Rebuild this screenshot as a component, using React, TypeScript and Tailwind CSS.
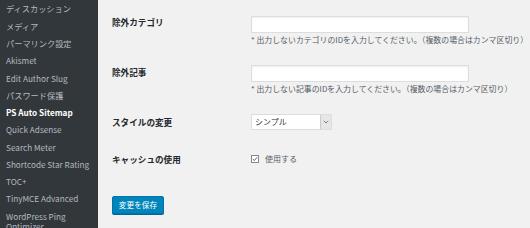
const FONT = '"Noto Sans CJK JP", "Noto Sans", sans-serif'

const MENU = [
  'ディスカッション',
  'メディア',
  'パーマリンク設定',
  'Akismet',
  'Edit Author Slug',
  'パスワード保護',
  'PS Auto Sitemap',
  'Quick Adsense',
  'Search Meter',
  'Shortcode Star Rating',
  'TOC+',
  'TinyMCE Advanced',
  'WordPress Ping Optimizer',
]

function Sidebar() {
  return (
    <aside className="w-[98px] shrink-0 overflow-hidden bg-[#32373c]">
      <ul>
        {MENU.map((item) => {
          const active = item === 'PS Auto Sitemap'
          return (
            <li
              key={item}
              className={
                active
                  ? 'py-[3.4px] pl-[6px] pr-[4px] text-[8.2px] leading-[10.5px] font-bold text-white'
                  : 'py-[3.4px] pl-[6px] pr-[4px] text-[8.2px] leading-[10.5px] text-[#b4b9be]'
              }
            >
              {item === 'WordPress Ping Optimizer' ? (
                <>WordPress Ping<br />Optimizer</>
              ) : (
                item
              )}
            </li>
          )
        })}
      </ul>
    </aside>
  )
}

function Label({ children }: { children: string }) {
  return <div className="w-[139px] shrink-0 text-[8.6px] leading-[12px] font-bold text-[#23282d]">{children}</div>
}

function TextField({ help }: { help: string }) {
  return (
    <div className="flex w-[279px] flex-col">
      <div className="h-[17px] w-[218px] border border-[#dddddd] bg-white shadow-[inset_0_1px_2px_rgba(0,0,0,0.07)]" />
      <p className="mt-[1px] text-[7.9px] leading-[11px] text-[#555d66]">{help}</p>
    </div>
  )
}

export default function App() {
  return (
    <div className="flex h-[228px] w-[530px] overflow-hidden bg-[#f1f1f1]" style={{ fontFamily: FONT }}>
      <Sidebar />
      <main className="flex flex-1 flex-col pl-[14px] pt-[16px]">
        <div className="flex">
          <Label>除外カテゴリ</Label>
          <TextField help="* 出力しないカテゴリのIDを入力してください。（複数の場合はカンマ区切り）" />
        </div>

        <div className="mt-[20px] flex">
          <div className="pt-[1px]"><Label>除外記事</Label></div>
          <TextField help="* 出力しない記事のIDを入力してください。（複数の場合はカンマ区切り）" />
        </div>

        <div className="mt-[20px] flex items-center">
          <Label>スタイルの変更</Label>
          <div className="flex h-[16px] w-[81px] border border-[#dddddd] bg-white">
            <span className="flex-1 pl-[3px] text-[8px] leading-[14px] text-[#32373c]">シンプル</span>
            <span className="flex w-[11px] items-center justify-center border-l border-[#cccccc] bg-[#e6e6e6]">
              <svg width="6" height="4" viewBox="0 0 6 4">
                <path d="M0.8 0.8 L3 3 L5.2 0.8" fill="none" stroke="#72777c" strokeWidth="0.9" />
              </svg>
            </span>
          </div>
        </div>

        <div className="mt-[23px] flex items-center">
          <Label>キャッシュの使用</Label>
          <div className="flex items-center">
            <span className="flex h-[8px] w-[8px] items-center justify-center border border-[#7e8993] bg-white">
              <svg width="7" height="6" viewBox="0 0 7 6">
                <path d="M1 3 L2.8 4.8 L6 1" fill="none" stroke="#444" strokeWidth="1" />
              </svg>
            </span>
            <span className="ml-[6px] text-[8px] leading-[12px] text-[#555d66]">使用する</span>
          </div>
        </div>

        <div className="mt-[24px]">
          <button className="h-[18px] w-[52px] rounded-[2px] border border-[#0073aa] bg-[#0085ba] text-[7.7px] leading-[16px] text-white shadow-[0_1px_0_#006799]">
            変更を保存
          </button>
        </div>
      </main>
    </div>
  )
}
